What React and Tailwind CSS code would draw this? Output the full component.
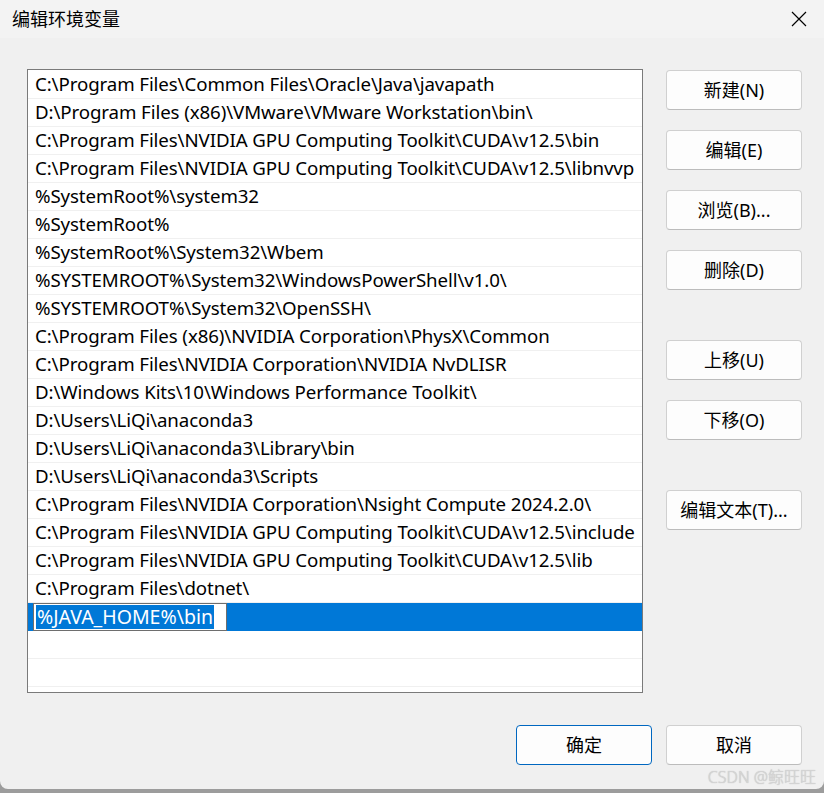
import React from 'react';

const paths = [
  'C:\\Program Files\\Common Files\\Oracle\\Java\\javapath',
  'D:\\Program Files (x86)\\VMware\\VMware Workstation\\bin\\',
  'C:\\Program Files\\NVIDIA GPU Computing Toolkit\\CUDA\\v12.5\\bin',
  'C:\\Program Files\\NVIDIA GPU Computing Toolkit\\CUDA\\v12.5\\libnvvp',
  '%SystemRoot%\\system32',
  '%SystemRoot%',
  '%SystemRoot%\\System32\\Wbem',
  '%SYSTEMROOT%\\System32\\WindowsPowerShell\\v1.0\\',
  '%SYSTEMROOT%\\System32\\OpenSSH\\',
  'C:\\Program Files (x86)\\NVIDIA Corporation\\PhysX\\Common',
  'C:\\Program Files\\NVIDIA Corporation\\NVIDIA NvDLISR',
  'D:\\Windows Kits\\10\\Windows Performance Toolkit\\',
  'D:\\Users\\LiQi\\anaconda3',
  'D:\\Users\\LiQi\\anaconda3\\Library\\bin',
  'D:\\Users\\LiQi\\anaconda3\\Scripts',
  'C:\\Program Files\\NVIDIA Corporation\\Nsight Compute 2024.2.0\\',
  'C:\\Program Files\\NVIDIA GPU Computing Toolkit\\CUDA\\v12.5\\include',
  'C:\\Program Files\\NVIDIA GPU Computing Toolkit\\CUDA\\v12.5\\lib',
  'C:\\Program Files\\dotnet\\',
];

const Button = ({ children, primary }) => (
  <button
    className={
      'w-[136px] h-[40px] rounded-[4px] bg-[#fdfdfd] text-[18px] text-black flex items-center justify-center ' +
      (primary ? 'border border-[#0067c0]' : 'border border-[#d0d0d0] border-b-[#bcbcbc]')
    }
  >
    {children}
  </button>
);

export default function App() {
  return (
    <div className="w-[824px] h-[793px] bg-[#9c9c9c] relative overflow-hidden [font-family:'Noto_Sans','Noto_Sans_CJK_SC',sans-serif]">
      <div className="w-[824px] h-[789px] bg-[#f0f0f0] rounded-b-[8px] flex flex-col">
        {/* Title bar */}
        <div className="h-[38px] bg-[#f3f3f3] flex items-center justify-between pl-[12px] pr-[17px]">
          <span className="text-[18px] text-black leading-none">编辑环境变量</span>
          <svg width="16" height="16" viewBox="0 0 16 16" className="text-black">
            <path d="M1 1 L15 15 M15 1 L1 15" stroke="currentColor" strokeWidth="1.2" fill="none" />
          </svg>
        </div>

        {/* Body */}
        <div className="flex pl-[27px] pt-[31px]">
          <div className="w-[616px] h-[624px] border border-[#7a7a7a] bg-white pt-[1px] overflow-hidden">
            {paths.map((p) => (
              <div key={p} className="h-[28px] border-b border-[#f0f0f0] pl-[7px] flex items-center text-[18.7px] tracking-[-0.1px] text-black whitespace-nowrap overflow-hidden">
                {p}
              </div>
            ))}
            <div className="h-[28px] bg-[#0078d7] flex items-stretch pl-[5px]">
              <div className="w-[194px] border border-[#6e6e6e] bg-white flex items-center pl-[2px]">
                <span className="bg-[#0078d7] text-white text-[19.5px] px-[1px] leading-[24px]">%JAVA_HOME%\bin</span>
              </div>
            </div>
            <div className="h-[28px] border-b border-[#f0f0f0]" />
            <div className="h-[28px] border-b border-[#f0f0f0]" />
          </div>

          <div className="ml-[23px] pt-[1px] flex flex-col">
            <Button>新建(N)</Button>
            <div className="h-[20px]" />
            <Button>编辑(E)</Button>
            <div className="h-[20px]" />
            <Button>浏览(B)...</Button>
            <div className="h-[20px]" />
            <Button>删除(D)</Button>
            <div className="h-[50px]" />
            <Button>上移(U)</Button>
            <div className="h-[20px]" />
            <Button>下移(O)</Button>
            <div className="h-[50px]" />
            <Button>编辑文本(T)...</Button>
          </div>
        </div>

        {/* Footer */}
        <div className="flex justify-end gap-[14px] pr-[22px] mt-[32px]">
          <Button primary>确定</Button>
          <Button>取消</Button>
        </div>
      </div>

      {/* Watermark */}
      <div className="absolute right-[8px] bottom-[4px] text-[16px] text-[#d6d6d6] [text-shadow:0_0_1px_#b0b0b0] font-light">
        CSDN @鲸旺旺
      </div>
    </div>
  );
}
